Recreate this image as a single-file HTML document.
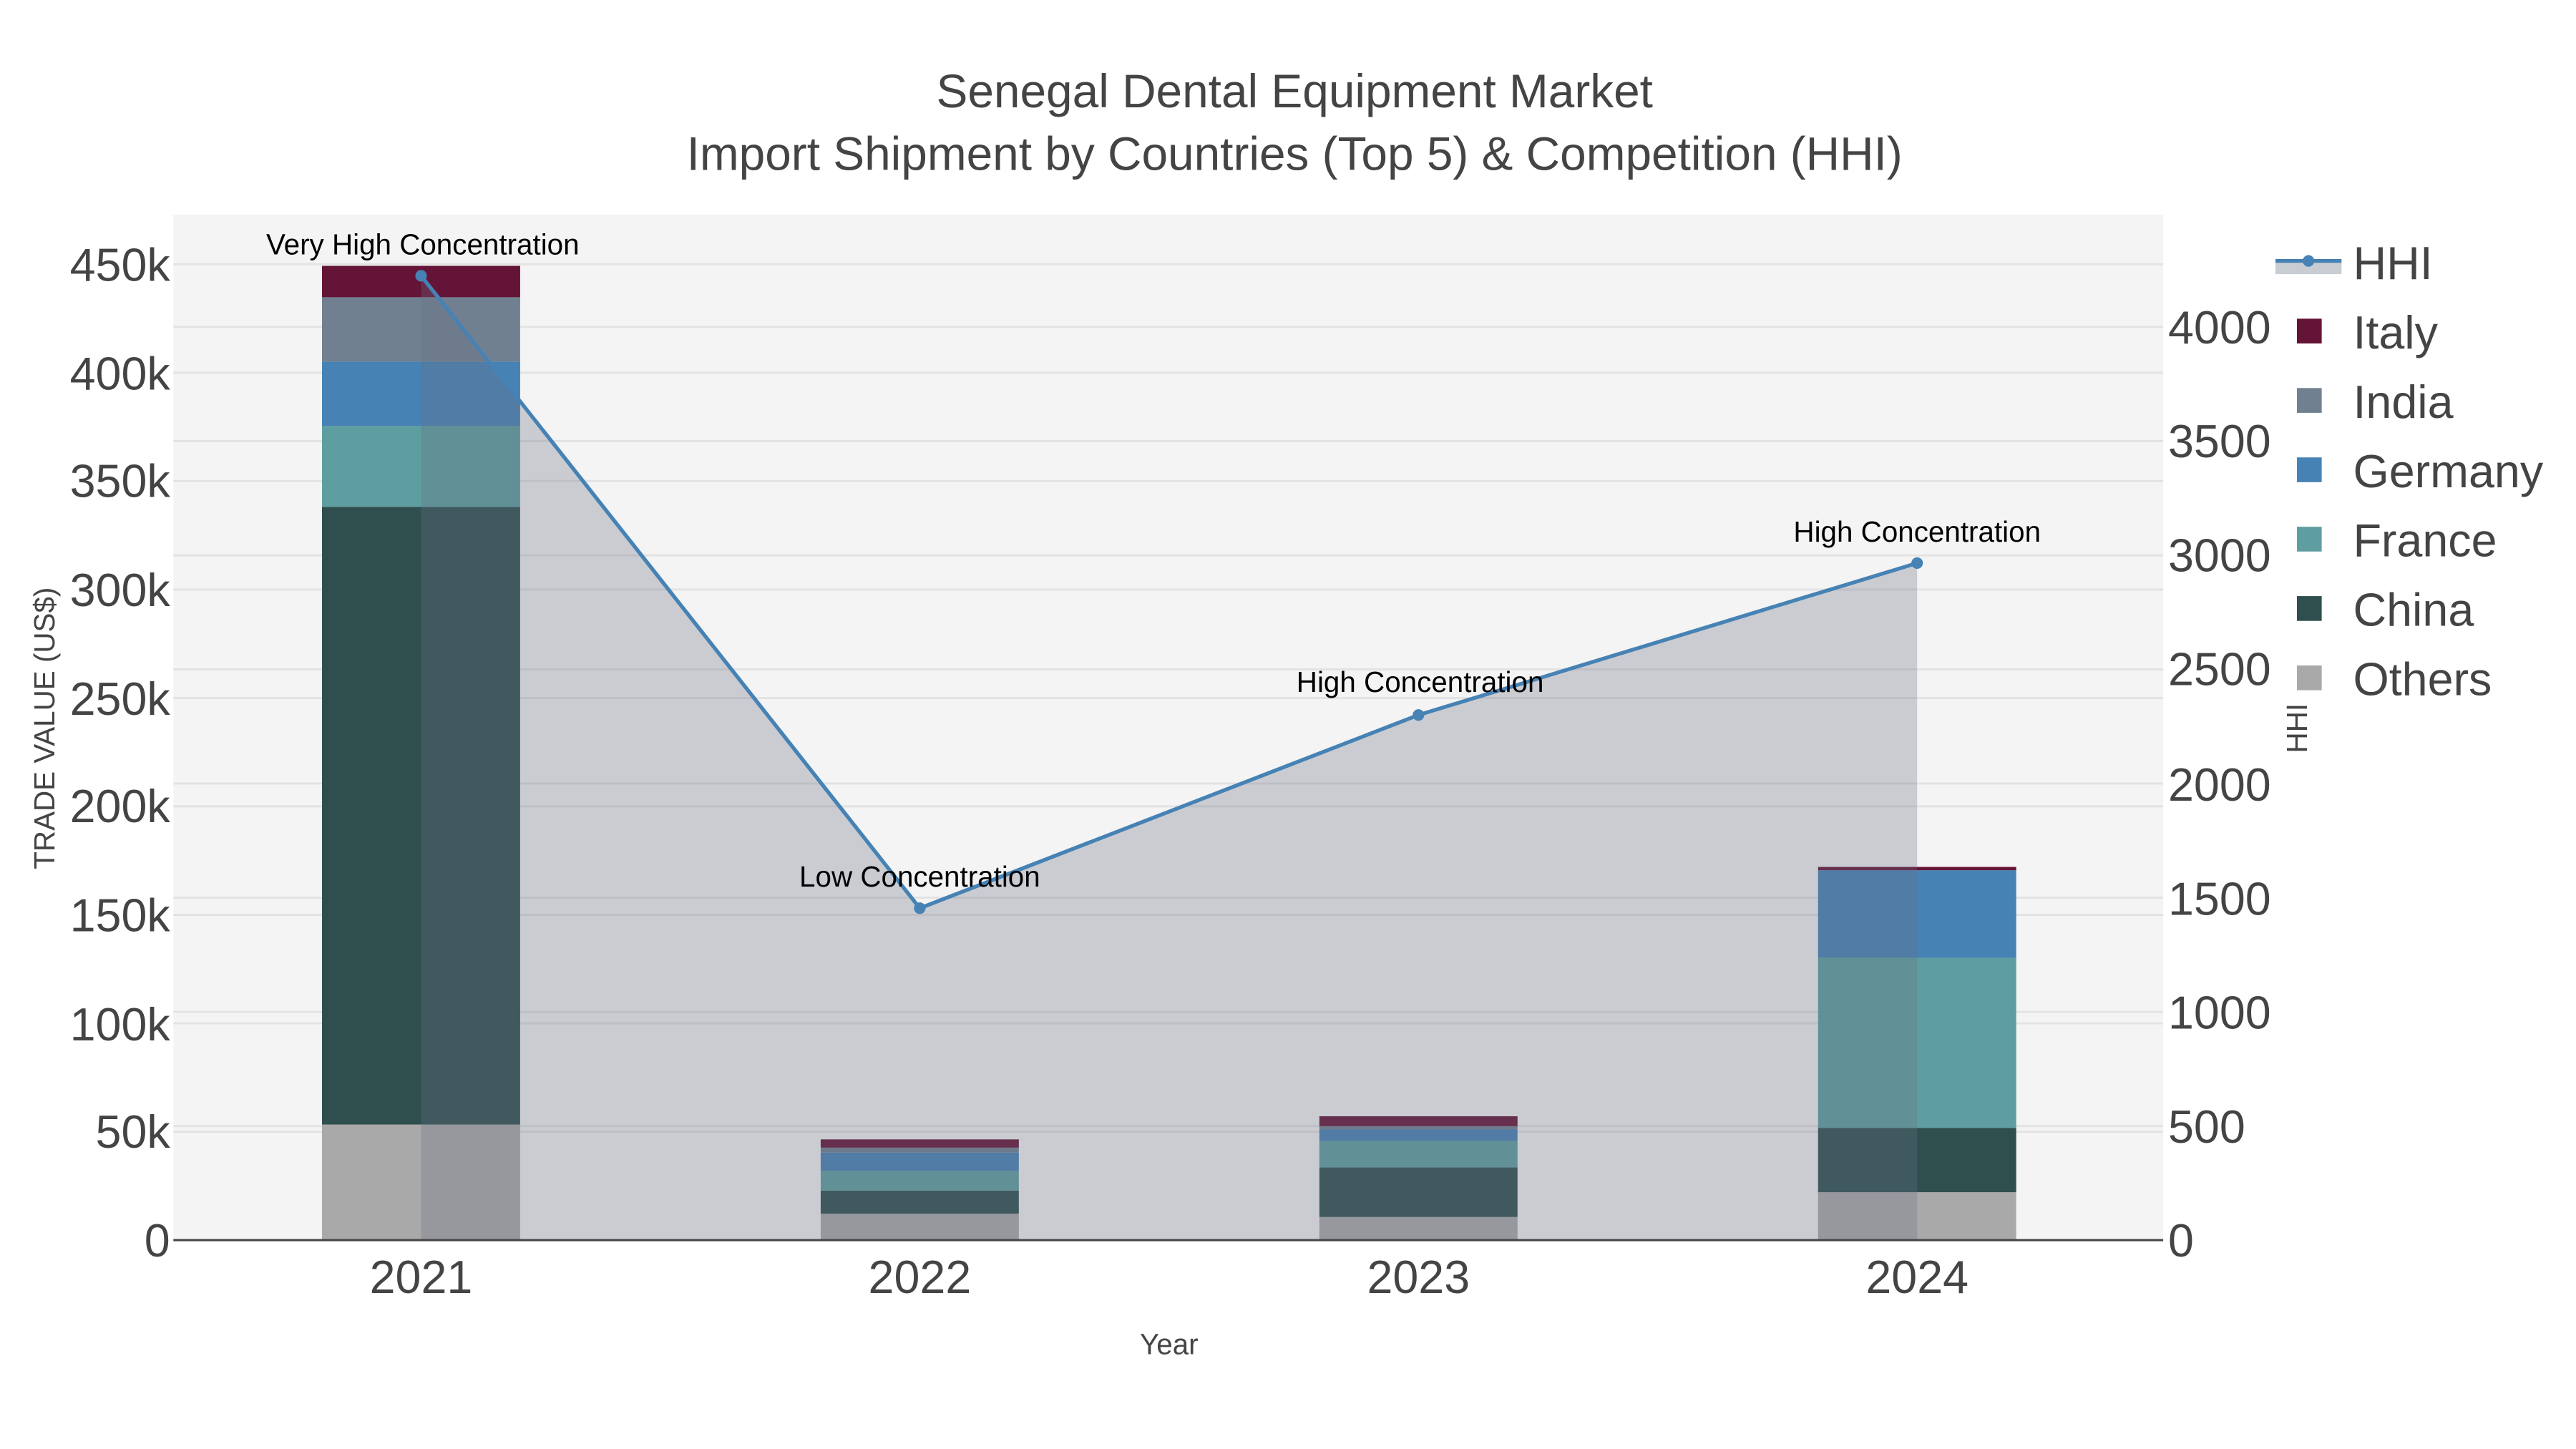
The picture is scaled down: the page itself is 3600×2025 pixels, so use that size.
<!DOCTYPE html>
<html><head><meta charset="utf-8"><style>
html,body{margin:0;padding:0;background:#fff;}
svg{display:block;font-family:"Liberation Sans",sans-serif;}
</style></head><body>
<svg width="3600" height="2025" viewBox="0 0 1560 877.5" xmlns="http://www.w3.org/2000/svg">
<rect width="1560" height="877.5" fill="#fff"/>
<rect x="105" y="130" width="1205" height="621" fill="#f4f4f4"/>
<g stroke="#e3e3e3" stroke-width="1.3">
<line x1="105" x2="1310" y1="685.3" y2="685.3"/><line x1="105" x2="1310" y1="619.7" y2="619.7"/>
<line x1="105" x2="1310" y1="554" y2="554"/><line x1="105" x2="1310" y1="488.3" y2="488.3"/>
<line x1="105" x2="1310" y1="422.7" y2="422.7"/><line x1="105" x2="1310" y1="357" y2="357"/>
<line x1="105" x2="1310" y1="291.3" y2="291.3"/><line x1="105" x2="1310" y1="225.7" y2="225.7"/>
<line x1="105" x2="1310" y1="160" y2="160"/>
<line x1="105" x2="1310" y1="681.9" y2="681.9"/><line x1="105" x2="1310" y1="612.8" y2="612.8"/>
<line x1="105" x2="1310" y1="543.6" y2="543.6"/><line x1="105" x2="1310" y1="474.5" y2="474.5"/>
<line x1="105" x2="1310" y1="405.4" y2="405.4"/><line x1="105" x2="1310" y1="336.3" y2="336.3"/>
<line x1="105" x2="1310" y1="267.1" y2="267.1"/><line x1="105" x2="1310" y1="198" y2="198"/>
</g>
<g>
<rect x="195" y="681" width="120" height="70" fill="#a9a9a9"/>
<rect x="195" y="307" width="120" height="374" fill="#2f4f4f"/>
<rect x="195" y="258" width="120" height="49" fill="#5f9ea0"/>
<rect x="195" y="219" width="120" height="39" fill="#4682b4"/>
<rect x="195" y="180" width="120" height="39" fill="#708090"/>
<rect x="195" y="161" width="120" height="19" fill="#641436"/>

<rect x="497" y="735" width="120" height="16" fill="#a9a9a9"/>
<rect x="497" y="721" width="120" height="14" fill="#2f4f4f"/>
<rect x="497" y="709" width="120" height="12" fill="#5f9ea0"/>
<rect x="497" y="698" width="120" height="11" fill="#4682b4"/>
<rect x="497" y="695" width="120" height="3" fill="#708090"/>
<rect x="497" y="690" width="120" height="5" fill="#641436"/>

<rect x="799" y="737" width="120" height="14" fill="#a9a9a9"/>
<rect x="799" y="707" width="120" height="30" fill="#2f4f4f"/>
<rect x="799" y="691" width="120" height="16" fill="#5f9ea0"/>
<rect x="799" y="684" width="120" height="7" fill="#4682b4"/>
<rect x="799" y="682" width="120" height="2" fill="#708090"/>
<rect x="799" y="676" width="120" height="6" fill="#641436"/>

<rect x="1101" y="722" width="120" height="29" fill="#a9a9a9"/>
<rect x="1101" y="683" width="120" height="39" fill="#2f4f4f"/>
<rect x="1101" y="580" width="120" height="103" fill="#5f9ea0"/>
<rect x="1101" y="527" width="120" height="53" fill="#4682b4"/>
<rect x="1101" y="525" width="120" height="2" fill="#641436"/>
</g>
<polygon points="255,751 255,167 557,550 859,433 1161,341 1161,751" fill="#6a7286" fill-opacity="0.3"/>
<polyline points="255,167 557,550 859,433 1161,341" fill="none" stroke="#4682b4" stroke-width="2.3"/>
<g fill="#4682b4"><circle cx="255" cy="167" r="3.5"/><circle cx="557" cy="550" r="3.5"/><circle cx="859" cy="433" r="3.5"/><circle cx="1161" cy="341" r="3.5"/></g>
<line x1="105" x2="1310" y1="751" y2="751" stroke="#444" stroke-width="1.3"/>
<g font-size="17.5" fill="#000" text-anchor="middle">
<text x="256" y="154">Very High Concentration</text>
<text x="557" y="537">Low Concentration</text>
<text x="860" y="419">High Concentration</text>
<text x="1161" y="328">High Concentration</text>
</g>
<g fill="#444" text-anchor="middle" font-size="28.5">
<text x="784" y="65">Senegal Dental Equipment Market</text>
<text x="784" y="103">Import Shipment by Countries (Top 5) &amp; Competition (HHI)</text>
</g>
<g fill="#444" font-size="28" text-anchor="end">
<text x="103" y="761">0</text><text x="103" y="695">50k</text><text x="103" y="630">100k</text>
<text x="103" y="564">150k</text><text x="103" y="498">200k</text><text x="103" y="433">250k</text>
<text x="103" y="367">300k</text><text x="103" y="301">350k</text><text x="103" y="236">400k</text>
<text x="103" y="170">450k</text>
</g>
<g fill="#444" font-size="28" text-anchor="start">
<text x="1313" y="761">0</text><text x="1313" y="692">500</text><text x="1313" y="623">1000</text>
<text x="1313" y="554">1500</text><text x="1313" y="485">2000</text><text x="1313" y="415">2500</text>
<text x="1313" y="346">3000</text><text x="1313" y="277">3500</text><text x="1313" y="208">4000</text>
</g>
<g fill="#444" font-size="28" text-anchor="middle">
<text x="255" y="783">2021</text><text x="557" y="783">2022</text><text x="859" y="783">2023</text><text x="1161" y="783">2024</text>
</g>
<text x="708" y="820" fill="#444" font-size="17.5" text-anchor="middle">Year</text>
<text transform="translate(33,441) rotate(-90)" fill="#444" font-size="17.5" text-anchor="middle">TRADE VALUE (US$)</text>
<text transform="translate(1397,441) rotate(-90)" fill="#444" font-size="17.5" text-anchor="middle">HHI</text>
<rect x="1378" y="159" width="40" height="7" fill="#c8ccd3"/>
<line x1="1378" x2="1418" y1="158" y2="158" stroke="#4682b4" stroke-width="2.3"/>
<circle cx="1398" cy="158" r="3.5" fill="#4682b4"/>
<g font-size="28" fill="#444">
<text x="1425" y="169">HHI</text>
<text x="1425" y="211">Italy</text><text x="1425" y="253">India</text><text x="1425" y="295">Germany</text>
<text x="1425" y="337">France</text><text x="1425" y="379">China</text><text x="1425" y="421">Others</text>
</g>
<rect x="1391" y="193" width="15" height="15" fill="#641436"/>
<rect x="1391" y="235" width="15" height="15" fill="#708090"/>
<rect x="1391" y="277" width="15" height="15" fill="#4682b4"/>
<rect x="1391" y="319" width="15" height="15" fill="#5f9ea0"/>
<rect x="1391" y="361" width="15" height="15" fill="#2f4f4f"/>
<rect x="1391" y="403" width="15" height="15" fill="#a9a9a9"/>
</svg>
</body></html>
